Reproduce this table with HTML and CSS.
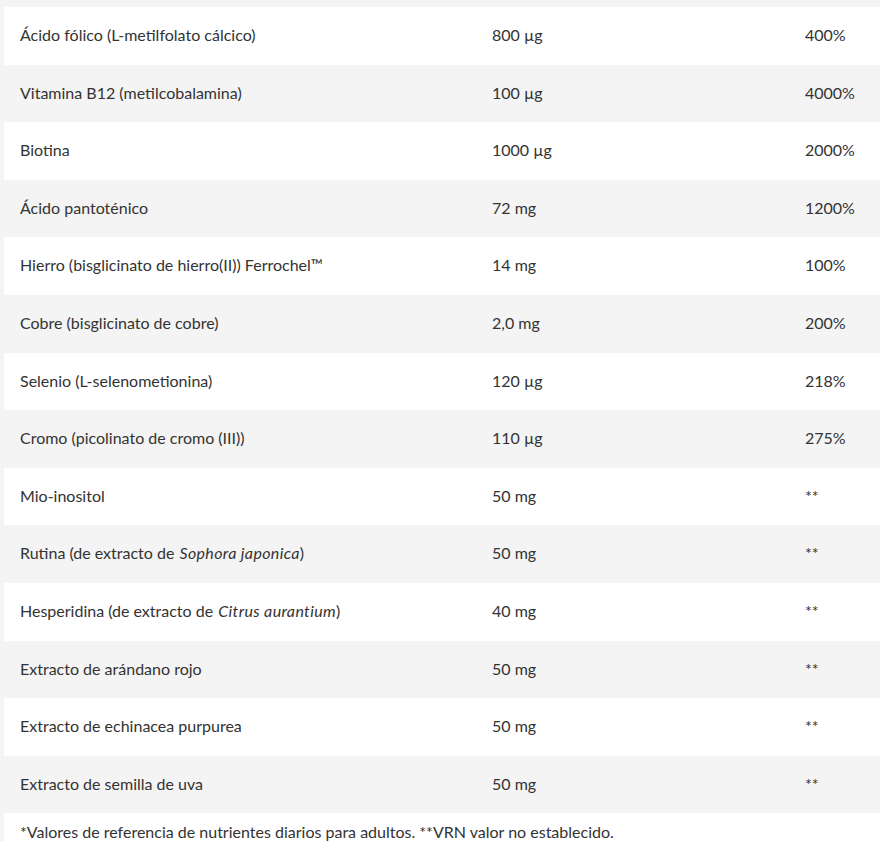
FILE: index.html
```html
<!DOCTYPE html>
<html lang="es">
<head>
<meta charset="utf-8">
<link rel="stylesheet" href="styles.css">
</head>
<body>
<div class="wrap">
<table class="nutri">
<colgroup><col class="c1"><col class="c2"><col class="c3"></colgroup>
<tbody>
<tr><td>Ácido fólico (L-metilfolato cálcico)</td><td>800 µg</td><td>400%</td></tr>
<tr><td>Vitamina B12 (metilcobalamina)</td><td>100 µg</td><td>4000%</td></tr>
<tr><td>Biotina</td><td>1000 µg</td><td>2000%</td></tr>
<tr><td>Ácido pantoténico</td><td>72 mg</td><td>1200%</td></tr>
<tr><td>Hierro (bisglicinato de hierro(II)) Ferrochel™</td><td>14 mg</td><td>100%</td></tr>
<tr><td>Cobre (bisglicinato de cobre)</td><td>2,0 mg</td><td>200%</td></tr>
<tr><td>Selenio (L-selenometionina)</td><td>120 µg</td><td>218%</td></tr>
<tr><td>Cromo (picolinato de cromo (III))</td><td>110 µg</td><td>275%</td></tr>
<tr><td>Mio-inositol</td><td>50 mg</td><td>**</td></tr>
<tr><td>Rutina (de extracto de <em class="latin">Sophora japonica</em>)</td><td>50 mg</td><td>**</td></tr>
<tr><td>Hesperidina (de extracto de <em class="latin">Citrus aurantium</em>)</td><td>40 mg</td><td>**</td></tr>
<tr><td>Extracto de arándano rojo</td><td>50 mg</td><td>**</td></tr>
<tr><td>Extracto de echinacea purpurea</td><td>50 mg</td><td>**</td></tr>
<tr><td>Extracto de semilla de uva</td><td>50 mg</td><td>**</td></tr>
<tr class="foot"><td colspan="3">*Valores de referencia de nutrientes diarios para adultos. **VRN valor no establecido.</td></tr>
</tbody>
</table>
</div>
</body>
</html>
```
FILE: styles.css
```css
html, body {
  margin: 0;
  padding: 0;
  background: #f4f4f4;
}
body {
  font-family: Lato, "Open Sans", sans-serif;
  font-size: 16px;
  color: #333333;
}
.wrap {
  padding: 7px 0 0 4px;
}
.nutri {
  border-collapse: collapse;
  width: 876px;
  table-layout: fixed;
}
.c1 { width: 472px; }
.c2 { width: 313px; }
.nutri td {
  padding: 15px 16px 17px;
  height: 25.6px;
  line-height: 25.6px;
  vertical-align: middle;
  white-space: nowrap;
}
.nutri tr:nth-child(odd) td {
  background: #ffffff;
}
.nutri tr:nth-child(even) td {
  background: transparent;
}
.nutri tr.foot td {
  padding-top: 6px;
}
.latin {
  letter-spacing: 0.35px;
  padding-left: 1px;
}
```
